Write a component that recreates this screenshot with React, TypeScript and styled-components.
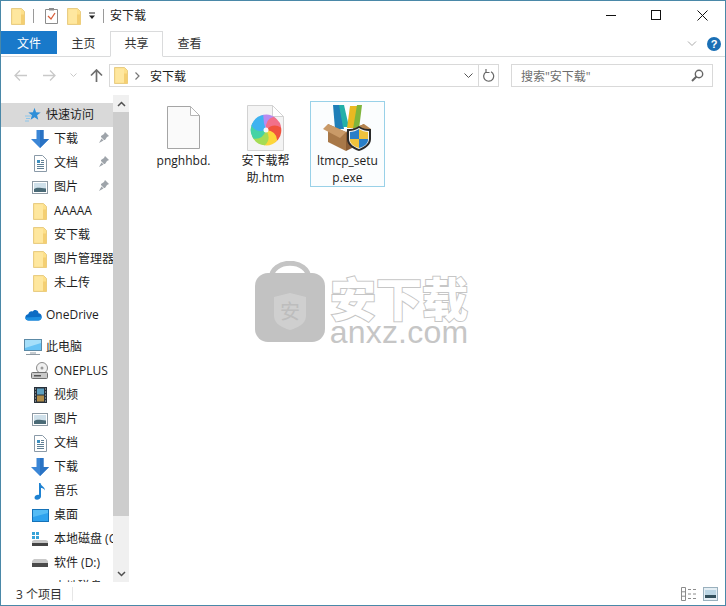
import React from "react";
import styled, { createGlobalStyle } from "styled-components";

const Global = createGlobalStyle`
  html, body { margin: 0; padding: 0; background: #fff; overflow: hidden; }
  * { box-sizing: border-box; }
  body { font-family: "Open Sans", "Noto Sans CJK SC", sans-serif; font-size: 12px; color: #1a1a1a; }
`;

const Win = styled.div`
  position: relative;
  width: 726px; height: 606px;
  border: 1px solid #4a88a8;
  background: #fff;
  display: flex; flex-direction: column;
  overflow: hidden;
`;
const TitleBar = styled.div`
  height: 30px; display: flex; align-items: center; padding-left: 10px; flex: none;
`;
const Sep = styled.div<{ $l: number; $r: number }>`
  width: 1px; height: 14px; background: #9a9a9a; margin: 0 ${p => p.$r}px 0 ${p => p.$l}px;
`;
const Gap = styled.div<{ $w: number }>`width: ${p => p.$w}px; flex: none;`;
const TitleText = styled.span`font-size: 12px; color: #222; line-height: 16px;`;
const WinButtons = styled.div`margin-left: auto; display: flex; height: 30px;`;
const WinBtn = styled.div`width: 45.5px; height: 30px; display: flex; align-items: center; justify-content: center; margin-top: -1px;`;

const Ribbon = styled.div`
  height: 26px; flex: none; display: flex; align-items: flex-start;
  border-bottom: 1px solid #dadbdc; position: relative;
`;
const FileTab = styled.div`
  width: 56px; height: 23px; background: #1979ca; color: #fff;
  display: flex; align-items: center; justify-content: center; font-size: 12px;
`;
const Tab = styled.div<{ $active?: boolean; $w: number }>`
  width: ${p => p.$w}px; height: 26px; display: flex; align-items: center; justify-content: center; padding-bottom: 3px;
  color: #333; font-size: 12px;
  ${p => p.$active ? "border: 1px solid #dadbdc; border-bottom: 1px solid #fff; background: #fff;" : ""}
`;
const RibbonRight = styled.div`margin-left: auto; display: flex; align-items: center; gap: 10px; height: 24px; padding-right: 4px; margin-top: 1px;`;

const AddressRow = styled.div`
  height: 38px; flex: none; display: flex; align-items: flex-start; padding: 7px 12px 0 11px;
`;
const NavBtns = styled.div`display: flex; align-items: center; width: 97px; flex: none; height: 22px;`;
const NavBtn = styled.div<{ $w: number }>`width: ${p => p.$w}px; display: flex; justify-content: center; flex: none;`;
const AddressBox = styled.div`
  width: 390px; height: 23px; border: 1px solid #d9d9d9; display: flex; align-items: center; padding-left: 4px; flex: none;
`;
const Crumb = styled.span`font-size: 12px; color: #1c1c1c; margin-left: 10px;`;
const AddrEnd = styled.div`margin-left: auto; display: flex; align-items: center; height: 100%;`;
const AddrCell = styled.div<{ $w: number; $line?: boolean }>`
  width: ${p => p.$w}px; height: 100%; display: flex; align-items: center; justify-content: center;
  ${p => p.$line ? "border-left: 1px solid #d9d9d9;" : ""}
`;
const Search = styled.div`
  width: 202px; height: 23px; margin-left: 12px; border: 1px solid #d9d9d9; display: flex; align-items: center;
  justify-content: space-between; padding: 0 8px 0 9px; color: #6d6d6d; font-size: 12px; flex: none;
`;

const Main = styled.div`flex: 1; display: flex; min-height: 0; position: relative;`;
const Side = styled.div`width: 112px; flex: none; overflow: hidden; padding-top: 8px;`;
const NavRow = styled.div<{ $level: number; $sel?: boolean; $top?: number }>`
  height: 24px; display: flex; align-items: center; white-space: nowrap; overflow: hidden; position: relative;
  padding-left: ${p => p.$level ? 28 : 23}px;
  margin-top: ${p => p.$top ?? 0}px;
  background: ${p => p.$sel ? "#d9d9d9" : "transparent"};
  color: #1e1e1e;
`;
const NavIconBox = styled.div<{ $w: number }>`width: ${p => p.$w}px; height: 18px; flex: none; display: flex; align-items: center; justify-content: center;`;
const NavLabel = styled.span`font-size: 12px; flex: none; margin-bottom: 2px;`;
const Pin = styled.div`position: absolute; right: 3px; top: 4px; width: 12px; height: 14px;`;

const Scroll = styled.div`width: 16px; flex: none; background: #f0f0f0; display: flex; flex-direction: column;`;
const ScrollBtn = styled.div`height: 17px; display: flex; align-items: center; justify-content: center; flex: none;`;
const Thumb = styled.div`height: 404px; background: #cdcdcd; flex: none;`;
const ScrollRest = styled.div`flex: 1;`;

const Files = styled.div`flex: 1; display: flex; gap: 7px; padding: 6px 0 0 17px; align-items: flex-start;`;
const Tile = styled.div<{ $sel?: boolean }>`
  width: 75px; height: 86px; display: flex; flex-direction: column; align-items: center;
  border: 1px solid ${p => p.$sel ? "#99d1e8" : "transparent"};
  background: ${p => p.$sel ? "#fbfdfe" : "transparent"};
`;
const TileIcon = styled.div`height: 49px; width: 100%; flex: none; display: flex; align-items: center; justify-content: center; margin-top: 1px;`;
const TileText = styled.div`font-size: 12px; line-height: 17px; text-align: center; color: #1c1c1c; white-space: nowrap;`;

const Status = styled.div`
  height: 23px; flex: none; display: flex; align-items: center; padding-left: 15px; position: relative; color: #333; font-size: 12px;
`;
const StatusSep = styled.div`width: 1px; height: 14px; background: #e6e6e6; margin-left: 10px;`;
const StatusIcons = styled.div`margin-left: auto; display: flex; gap: 6px; padding-right: 7px; align-items: center;`;

const Watermark = styled.div`
  position: absolute; left: 253px; top: 260px; display: flex; gap: 3px; pointer-events: none;
`;
const WmText = styled.div`display: flex; flex-direction: column; align-items: center; width: 140px;`;
const WmCn = styled.div`
  font-family: "Noto Sans CJK SC", sans-serif; font-size: 46px; font-weight: 900; line-height: 44px; height: 44px; margin-top: 13px;
  color: #fff; -webkit-text-stroke: 2px #c6c6c6; paint-order: stroke fill; white-space: nowrap;
`;
const WmEn = styled.div`
  font-family: "Liberation Sans", sans-serif; font-size: 32px; line-height: 28px; color: #c6c6c6; letter-spacing: 0.2px;
`;

const Folder = () => (
  <svg width="14" height="17" viewBox="0 0 14 17">
    <path d="M.5.5h10l3 3v13H.5z" fill="#fde08a" stroke="#e8cd85" />
    <path d="M1.5 1.5h8.5v14H1.5z" fill="#fee79f" />
    <path d="M10 6.5h3.5v10H10z" fill="#f4cf72" />
  </svg>
);
const Down = () => (
  <svg width="22" height="20" viewBox="0 0 22 20">
    <path d="M7.5 1h7v9H20L11 19 2 10h5.5z" fill="#3b86d6" />
    <path d="M11 1h3.5v9H20L11 19z" fill="#2a73c4" />
  </svg>
);
const Doc = () => (
  <svg width="13" height="17" viewBox="0 0 13 17">
    <path d="M.5.5h8l4 4v12H.5z" fill="#fff" stroke="#8a9aa8" />
    <path d="M3 5h3v3H3z" fill="#3d8fc0" />
    <path d="M7 5.5h3M7 7.5h3M3 9.5h7M3 11.5h7M3 13.5h7" stroke="#5f7f95" />
  </svg>
);
const Pics = () => (
  <svg width="16" height="13" viewBox="0 0 16 13">
    <rect x=".5" y=".5" width="15" height="12" fill="#fff" stroke="#8e9aa4" />
    <rect x="2" y="2" width="12" height="9" fill="#cfe0ea" />
    <path d="M2 8c3-2 6-1 12-.5V11H2z" fill="#4a6a76" />
  </svg>
);
const PinIcon = () => (
  <svg width="12" height="14" viewBox="0 0 12 14">
    <path d="M7 1l4 4-2 1-2 3-1 0-3-3 0-1 3-2zM3.5 7.5L1 12l4.5-2.5z" fill="#9ea4aa" />
  </svg>
);
const Star = () => (
  <svg width="16" height="16" viewBox="0 0 16 16">
    <path d="M9.5.8l1.6 4.4 4.6.2-3.6 2.9 1.2 4.5-3.8-2.6-3.9 2.6 1.3-4.5L3.3 5.4l4.6-.2z" fill="#2f8fd8" />
    <path d="M0 9h6M1 11.5h4M0 14h4" stroke="#8cc5ea" />
  </svg>
);
const Cloud = () => (
  <svg width="17" height="12" viewBox="0 0 17 12">
    <path d="M3.6 11.5C1.5 11.5.3 10 .3 8.4c0-1.6 1.2-3 2.9-3.1C3.9 3.1 5.6 1.8 7.5 2.5c1-1.5 3-2 4.5-1 1 .7 1.5 1.7 1.5 2.8 1.900 0 3.200 1.500 3.200 3.400 0 2.100-1.500 3.800-3.500 3.800z" fill="#0c6cc4" />
    <path d="M3.600 11.500c-2.100 0-3.300-1.500-3.300-3.100l16.400-.7c0 2.100-1.500 3.800-3.500 3.800z" fill="#1d8fe1" />
  </svg>
);
const Pc = () => (
  <svg width="18" height="16" viewBox="0 0 18 16">
    <rect x=".5" y=".5" width="17" height="11" fill="#67c3f5" stroke="#5c8aa6" />
    <path d="M1 1h16v3L1 9z" fill="#a5dffa" />
    <path d="M6 14h6M2 15.500h14" stroke="#8f9aa3" />
  </svg>
);
const Disk = () => (
  <svg width="18" height="18" viewBox="0 0 18 18">
    <circle cx="11" cy="6" r="5.500" fill="#f0f0f0" stroke="#8a8a8a" />
    <circle cx="11" cy="6" r="1.500" fill="#999" />
    <rect x=".5" y="10.500" width="16" height="6" rx="1" fill="#c9c9c9" stroke="#6f6f6f" />
    <rect x="3" y="13" width="7" height="1.500" fill="#555" />
  </svg>
);
const Video = () => (
  <svg width="13" height="16" viewBox="0 0 13 16">
    <rect width="13" height="16" fill="#27303a" />
    <rect x="3" y="1.500" width="7" height="6" fill="#5ea0c0" />
    <rect x="3" y="8.500" width="7" height="6" fill="#b08c48" />
    <path d="M1 2h1M1 5h1M1 8h1M1 11h1M1 14h1M11 2h1M11 5h1M11 8h1M11 11h1M11 14h1" stroke="#d0d0d0" />
  </svg>
);
const Music = () => (
  <svg width="12" height="18" viewBox="0 0 12 18">
    <path d="M5 1h1.500c.3 3 4.500 3.500 4.500 7.500-1-2-3-2.500-4-2.500v8.500c0 2-2 3.200-4 3.200-1.500 0-2.500-.8-2.500-2 0-1.800 2-3 3.500-3 .4 0 .7 0 1 .2z" fill="#1e82d2" />
  </svg>
);
const Desk = () => (
  <svg width="17" height="13" viewBox="0 0 17 13">
    <rect x=".5" y=".5" width="16" height="12" fill="#2ea2ee" stroke="#1572b8" />
    <path d="M1 1h15v3L1 8z" fill="#55bcf5" />
  </svg>
);
const WinDisk = () => (
  <svg width="18" height="16" viewBox="0 0 18 16">
    <path d="M1 1h3v3H1zM5 1h3v3H5zM1 5h3v3H1zM5 5h3v3H5z" fill="#37a3d8" />
    <path d="M1 10l2-1h12l2 1v5H1z" fill="#c7c7c7" />
    <rect x="1" y="12" width="16" height="3" fill="#444" />
  </svg>
);
const Drive = () => (
  <svg width="18" height="10" viewBox="0 0 18 10">
    <path d="M1 3l2-2h12l2 2v6H1z" fill="#c9c9c9" />
    <rect x="1" y="5" width="16" height="4" fill="#4a4a4a" />
  </svg>
);
const Blank = () => (
  <svg width="33" height="43" viewBox="0 0 33 43">
    <path d="M.5.5h23l9 9v33H.5z" fill="#fafafa" stroke="#a5a5a5" />
    <path d="M23.500.5v9h9z" fill="#fff" stroke="#b5b5b5" />
  </svg>
);
const blades = ["#b98af0", "#f2708a", "#f0533e", "#fdd63a", "#a5dc55", "#45d3a5", "#3fb2f0"];
const Htm = () => (
  <svg width="37" height="46" viewBox="0 0 37 46">
    <path d="M.5.5h25l11 11v34H.5z" fill="#f4f4f4" stroke="#d2d2d2" />
    <path d="M25.500.5v11h11z" fill="#fff" stroke="#d2d2d2" />
    <g transform="translate(19 25)">
      {blades.map((c, i) => (
        <path
          key={c}
          transform={`rotate(${i * 51.4 - 10})`}
          d="M0 0Q-8-7-3-15A15.300 15.300 0 0 1 12-9.500Q5-6 0 0z"
          fill={c}
        />
      ))}
      <circle r="2.500" fill="#f8f8f8" />
    </g>
  </svg>
);
const Setup = () => (
  <svg width="50" height="48" viewBox="0 0 50 48">
    <path d="M10 1h7l4 24H12z" fill="#1f7fb8" />
    <path d="M16 1h5l5 22h-6z" fill="#23b0a8" />
    <path d="M27 2h8l-3 22h-8z" fill="#e9b922" />
    <path d="M34 1h5l-3 24h-6z" fill="#7fb53c" />
    <path d="M5 20l18 8v19L5 38z" fill="#a87848" />
    <path d="M23 28l18-8v18L23 47z" fill="#8a5c34" />
    <path d="M5 20l18 8-6 6L0 25z" fill="#c99a68" />
    <path d="M41 20l-18 8 5 5 20-8z" fill="#b68550" />
    <path d="M36 22c4 3 8 3 12 3v10c0 6-6 10-12 12-6-2-12-6-12-12V25c4 0 8 0 12-3z" fill="#2a2a2a" />
    <path d="M36 24c3 2 7 3 10 3v8c0 5-5 8-10 10-5-2-10-5-10-10v-8c3 0 7-1 10-3z" fill="#f4f4f4" />
    <path d="M36 25c-3 2-6 3-9 3v7h9z" fill="#2a7fc8" />
    <path d="M36 35h9v1c0 4-5 7-9 8z" fill="#2a7fc8" />
    <path d="M36 25c3 2 6 3 9 3v7h-9z" fill="#f0c23c" />
    <path d="M36 35h-9v1c0 4 5 7 9 8z" fill="#f0c23c" />
  </svg>
);
const Bag = () => (
  <svg width="72" height="82" viewBox="0 0 72 82">
    <path d="M17 18C17-3 55-3 55 18" fill="none" stroke="#c4c4c4" strokeWidth="5" />
    <rect x="1" y="12" width="70" height="69" rx="13" fill="#c2c2c2" />
    <path d="M36 32l16 4v19c0 8-9 12-16 14-7-2-16-6-16-14V36z" fill="#cfcfcf" />
    <text x="36" y="58" textAnchor="middle" fontSize="20" fill="#bdbdbd" fontFamily="Noto Sans CJK SC">安</text>
  </svg>
);

const nav: Array<{ t: string; i: React.ReactNode; l: number; pin?: boolean; sel?: boolean; top?: number }> = [
  { t: "快速访问", i: <Star />, l: 0, sel: true },
  { t: "下载", i: <Down />, l: 1, pin: true },
  { t: "文档", i: <Doc />, l: 1, pin: true },
  { t: "图片", i: <Pics />, l: 1, pin: true },
  { t: "AAAAA", i: <Folder />, l: 1 },
  { t: "安下载", i: <Folder />, l: 1 },
  { t: "图片管理器", i: <Folder />, l: 1 },
  { t: "未上传", i: <Folder />, l: 1 },
  { t: "OneDrive", i: <Cloud />, l: 0, top: 8 },
  { t: "此电脑", i: <Pc />, l: 0, top: 8 },
  { t: "ONEPLUS", i: <Disk />, l: 1 },
  { t: "视频", i: <Video />, l: 1 },
  { t: "图片", i: <Pics />, l: 1 },
  { t: "文档", i: <Doc />, l: 1 },
  { t: "下载", i: <Down />, l: 1 },
  { t: "音乐", i: <Music />, l: 1 },
  { t: "桌面", i: <Desk />, l: 1 },
  { t: "本地磁盘 (C:)", i: <WinDisk />, l: 1 },
  { t: "软件 (D:)", i: <Drive />, l: 1 },
  { t: "本地磁盘 (E:)", i: <Drive />, l: 1 },
];

export default function App() {
  return (
    <Win>
      <Global />
      <TitleBar>
        <Folder />
        <Sep $l={8} $r={11} />
        <svg width="13" height="16" viewBox="0 0 13 16">
          <path d="M.5 1.500h12v14H.5z" fill="#fff" stroke="#8c8c8c" />
          <path d="M3 8l3 3 4-6" fill="none" stroke="#d8603c" strokeWidth="1.300" />
          <rect x="4" y="0" width="5" height="2.500" fill="#8c8c8c" />
        </svg>
        <Gap $w={9} />
        <Folder />
        <Gap $w={7} />
        <svg width="8" height="8" viewBox="0 0 8 8">
          <path d="M1 1h6" stroke="#222" />
          <path d="M1 3.500h6L4 7z" fill="#222" />
        </svg>
        <Sep $l={7} $r={6} />
        <TitleText>安下载</TitleText>
        <WinButtons>
          <WinBtn>
            <svg width="11" height="11" viewBox="0 0 11 11"><path d="M0 5.500h10" stroke="#111" /></svg>
          </WinBtn>
          <WinBtn>
            <svg width="11" height="11" viewBox="0 0 11 11"><rect x=".5" y=".5" width="9" height="9" fill="none" stroke="#111" /></svg>
          </WinBtn>
          <WinBtn>
            <svg width="11" height="11" viewBox="0 0 11 11"><path d="M.5.5l10 10M10.500.5l-10 10" stroke="#111" /></svg>
          </WinBtn>
        </WinButtons>
      </TitleBar>
      <Ribbon>
        <FileTab>文件</FileTab>
        <Tab $w={53}>主页</Tab>
        <Tab $w={53} $active>共享</Tab>
        <Tab $w={53}>查看</Tab>
        <RibbonRight>
          <svg width="10" height="6" viewBox="0 0 10 6"><path d="M1 .5l4 4 4-4" fill="none" stroke="#a9a9a9" /></svg>
          <svg width="14" height="14" viewBox="0 0 14 14">
            <circle cx="7" cy="7" r="7" fill="#1a6fb5" />
            <text x="7" y="11" textAnchor="middle" fontSize="11" fontWeight="700" fill="#fff" fontFamily="Liberation Sans">?</text>
          </svg>
        </RibbonRight>
      </Ribbon>
      <AddressRow>
        <NavBtns>
          <NavBtn $w={16}>
            <svg width="13" height="11" viewBox="0 0 13 11"><path d="M6 .5l-5 5 5 5M1 5.500h12" fill="none" stroke="#c9c9c9" strokeWidth="1.300" /></svg>
          </NavBtn>
          <NavBtn $w={13} />
          <NavBtn $w={16}>
            <svg width="13" height="11" viewBox="0 0 13 11"><path d="M7 .5l5 5-5 5M12 5.500H0" fill="none" stroke="#c9c9c9" strokeWidth="1.300" /></svg>
          </NavBtn>
          <NavBtn $w={32}>
            <svg width="7" height="5" viewBox="0 0 7 5"><path d="M.5.5l3 3 3-3" fill="none" stroke="#c9c9c9" /></svg>
          </NavBtn>
          <NavBtn $w={14}>
            <svg width="13" height="13" viewBox="0 0 13 13"><path d="M1 6.500l5.500-5.500 5.500 5.500M6.500 1v12" fill="none" stroke="#6e6e6e" strokeWidth="1.700" /></svg>
          </NavBtn>
        </NavBtns>
        <AddressBox>
          <Folder />
          <Gap $w={7} />
          <svg width="5" height="8" viewBox="0 0 5 8"><path d="M.5.5l3.500 3.500-3.500 3.500" fill="none" stroke="#777" strokeWidth="1.200" /></svg>
          <Crumb>安下载</Crumb>
          <AddrEnd>
            <AddrCell $w={19}>
              <svg width="9" height="6" viewBox="0 0 9 6"><path d="M.5.500l4 4 4-4" fill="none" stroke="#555" /></svg>
            </AddrCell>
            <AddrCell $w={20} $line>
              <svg width="12" height="13" viewBox="0 0 12 13"><path d="M8 2.800A5 5 0 1 1 3 3M3 0v3.500h3.500" fill="none" stroke="#666" strokeWidth="1.200" /></svg>
            </AddrCell>
          </AddrEnd>
        </AddressBox>
        <Search>
          <span>搜索"安下载"</span>
          <svg width="13" height="13" viewBox="0 0 13 13"><circle cx="8" cy="5" r="3.700" fill="none" stroke="#666" strokeWidth="1.400" /><path d="M5.500 7.500L1 12" stroke="#666" strokeWidth="2" /></svg>
        </Search>
      </AddressRow>
      <Main>
        <Side>
          {nav.map((n, i) => (
            <NavRow key={i} $level={n.l} $sel={n.sel} $top={n.top}>
              <NavIconBox $w={n.l ? 22 : 18}>{n.i}</NavIconBox>
              <Gap $w={n.l ? 3 : 4} />
              <NavLabel>{n.t}</NavLabel>
              {n.pin && <Pin><PinIcon /></Pin>}
            </NavRow>
          ))}
        </Side>
        <Scroll>
          <ScrollBtn>
            <svg width="9" height="6" viewBox="0 0 9 6"><path d="M1 5l3.500-3.500L8 5" fill="none" stroke="#505050" strokeWidth="1.500" /></svg>
          </ScrollBtn>
          <Thumb />
          <ScrollRest />
          <ScrollBtn>
            <svg width="9" height="6" viewBox="0 0 9 6"><path d="M1 1l3.500 3.500L8 1" fill="none" stroke="#505050" strokeWidth="1.500" /></svg>
          </ScrollBtn>
        </Scroll>
        <Files>
          <Tile>
            <TileIcon><Blank /></TileIcon>
            <TileText>pnghhbd.</TileText>
          </Tile>
          <Tile>
            <TileIcon><Htm /></TileIcon>
            <TileText>安下载帮<br />助.htm</TileText>
          </Tile>
          <Tile $sel>
            <TileIcon><Setup /></TileIcon>
            <TileText>ltmcp_setu<br />p.exe</TileText>
          </Tile>
        </Files>
      </Main>
      <Status>
        <span>3 个项目</span>
        <StatusSep />
        <StatusIcons>
          <svg width="16" height="14" viewBox="0 0 16 14">
            <path d="M.5.500h4v13h-4zM.5 4.800h4M.5 9.200h4" fill="none" stroke="#8c8c8c" />
            <path d="M7 2.500h3M12 2.500h3M7 7h3M12 7h3M7 11.500h3M12 11.500h3" stroke="#8c8c8c" />
          </svg>
          <svg width="15" height="14" viewBox="0 0 15 14" shapeRendering="crispEdges">
            <rect x=".5" y=".5" width="14" height="13" fill="#e4eef4" stroke="#9ab0bd" />
            <rect x="2" y="3" width="11" height="8" fill="#bcd6e4" />
            <rect x="2" y="8" width="11" height="3" fill="#33505c" />
          </svg>
        </StatusIcons>
      </Status>
      <Watermark>
        <Bag />
        <WmText>
          <WmCn>安下载</WmCn>
          <WmEn>anxz.com</WmEn>
        </WmText>
      </Watermark>
    </Win>
  );
}
